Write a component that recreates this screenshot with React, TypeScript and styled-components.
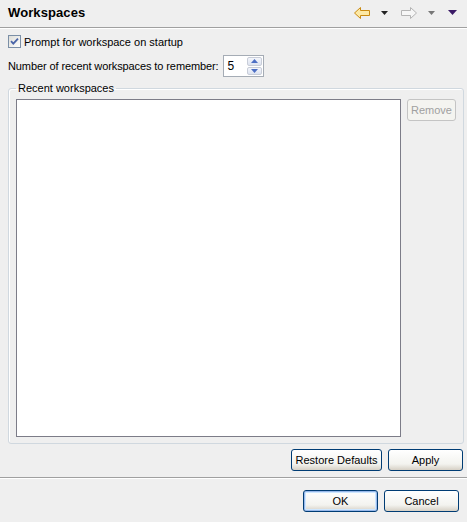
import React, { FC } from 'react';
import styled, { createGlobalStyle } from 'styled-components';

const GlobalStyle = createGlobalStyle`
  html, body {
    margin: 0;
    padding: 0;
    background: #efefef;
  }
  body {
    font-family: Tahoma, "Liberation Sans", Arial, sans-serif;
    font-size: 11px;
    color: #000;
  }
`;

const Page = styled.div`
  box-sizing: border-box;
  width: 467px;
  height: 522px;
  display: flex;
  flex-direction: column;
  background: #efefef;
`;

const Header = styled.div`
  box-sizing: border-box;
  height: 28px;
  display: flex;
  align-items: center;
  justify-content: space-between;
  padding: 0 8px 2px 8px;
  border-bottom: 1px solid #a0a0a0;
  box-shadow: 0 1px 0 #ffffff;
`;

const Title = styled.h1`
  margin: 0;
  font-size: 13px;
  font-weight: bold;
  letter-spacing: 0.1px;
`;

const NavBar = styled.div`
  display: flex;
  align-items: center;
  gap: 4px;
  margin-right: 2px;
`;

const Content = styled.div`
  flex: 1;
  display: flex;
  flex-direction: column;
  padding: 6px 4px 0 8px;
`;

const CheckRow = styled.label`
  display: flex;
  align-items: center;
  gap: 3px;
  height: 15px;
`;

const SpinRow = styled.div`
  display: flex;
  align-items: center;
  gap: 4px;
  margin-top: 5px;
  height: 24px;
  letter-spacing: -0.1px;
`;

const Spinner = styled.div`
  box-sizing: border-box;
  display: flex;
  width: 41px;
  height: 22px;
  border: 1px solid #a5acb5;
  background: #fff;
`;

const SpinText = styled.div`
  flex: 1;
  padding: 3px 0 0 4px;
  font-size: 12px;
`;

const SpinButtons = styled.div`
  box-sizing: border-box;
  width: 17px;
  display: flex;
  flex-direction: column;
  gap: 1px;
  padding: 1px;
`;

const SpinButton = styled.div`
  flex: 1;
  display: flex;
  align-items: center;
  justify-content: center;
  border: 1px solid #c8cdd8;
  border-radius: 2px;
  background: linear-gradient(#f4f6fb, #dde3f0);
`;

const Group = styled.fieldset`
  box-sizing: border-box;
  margin: 4px 0 0 0;
  padding: 5px 7px 4px 7px;
  height: 362px;
  border: 1px solid #d0d8df;
  border-radius: 3px;
  box-shadow: inset 1px 1px 0 #fff;
  display: flex;
  gap: 6px;
  align-items: flex-start;
`;

const Legend = styled.legend`
  padding: 0 2px;
  margin-left: 0;
  color: #000;
`;

const ListBox = styled.div`
  box-sizing: border-box;
  width: 385px;
  height: 338px;
  background: #fff;
  border: 1px solid #7c7c88;
`;

const PushButton = styled.button<{ $width: number; $focused?: boolean }>`
  box-sizing: border-box;
  width: ${({ $width }) => $width}px;
  height: 22px;
  padding: 0;
  font-family: inherit;
  font-size: 11px;
  color: ${({ disabled }) => (disabled ? '#a0a0a0' : '#000')};
  border: 1px solid ${({ disabled }) => (disabled ? '#c4c4c4' : '#003c74')};
  border-radius: 3px;
  background: ${({ disabled }) =>
    disabled ? '#f4f4f0' : 'linear-gradient(#ffffff 0%, #f3f3ef 70%, #d6d0c5 100%)'};
  box-shadow: ${({ $focused }) =>
    $focused ? 'inset 0 0 0 1px #98b8ea, inset 0 0 0 2px #cee7ff' : 'none'};
`;

const ButtonRow = styled.div`
  display: flex;
  justify-content: flex-end;
  gap: 6px;
  margin-top: 5px;
`;

const Footer = styled.div`
  box-sizing: border-box;
  height: 45px;
  display: flex;
  justify-content: flex-end;
  align-items: flex-start;
  gap: 6px;
  padding: 12px 8px 0 0;
  border-top: 1px solid #a0a0a0;
  box-shadow: inset 0 1px 0 #fff;
`;

const CheckBox: FC = () => (
  <svg width="13" height="13" viewBox="0 0 13 13">
    <defs>
      <linearGradient id="cbg" x1="0" y1="0" x2="1" y2="1">
        <stop offset="0" stopColor="#dcdcd7" />
        <stop offset="1" stopColor="#ffffff" />
      </linearGradient>
    </defs>
    <rect x="0.5" y="0.5" width="12" height="12" fill="url(#cbg)" stroke="#7b8fa6" />
    <path d="M3 6.2 L5.3 8.6 L10 3.6" fill="none" stroke="#4a65a8" strokeWidth="1.8" />
  </svg>
);

const Triangle: FC<{ color: string; up?: boolean }> = ({ color, up }) => (
  <svg width="7" height="4" viewBox="0 0 7 4">
    <path d={up ? 'M0 4 L3.5 0 L7 4 Z' : 'M0 0 L7 0 L3.5 4 Z'} fill={color} />
  </svg>
);

const BackArrow: FC = () => (
  <svg width="16" height="12" viewBox="0 0 16 12">
    <path
      d="M0.5 6 L6.5 0.5 L6.5 3.5 L15.5 3.5 L15.5 8.5 L6.5 8.5 L6.5 11.5 Z"
      fill="#fde9a5"
      stroke="#c98a12"
      strokeLinejoin="round"
    />
  </svg>
);

const ForwardArrow: FC = () => (
  <svg width="16" height="12" viewBox="0 0 16 12">
    <path
      d="M15.5 6 L9.5 0.5 L9.5 3.5 L0.5 3.5 L0.5 8.5 L9.5 8.5 L9.5 11.5 Z"
      fill="#f6f6f6"
      stroke="#b4b4b4"
      strokeLinejoin="round"
    />
  </svg>
);

const Spacer = styled.span<{ $w: number }>`
  width: ${({ $w }) => $w}px;
`;

const App: FC = () => (
  <Page>
    <GlobalStyle />
    <Header>
      <Title>Workspaces</Title>
      <NavBar>
        <BackArrow />
        <Spacer $w={3} />
        <Triangle color="#222" />
        <Spacer $w={5} />
        <ForwardArrow />
        <Spacer $w={3} />
        <Triangle color="#777" />
        <Spacer $w={5} />
        <svg width="9" height="5" viewBox="0 0 9 5">
          <path d="M0 0 L9 0 L4.5 5 Z" fill="#3a1a66" />
        </svg>
      </NavBar>
    </Header>
    <Content>
      <CheckRow>
        <CheckBox />
        <span>Prompt for workspace on startup</span>
      </CheckRow>
      <SpinRow>
        <span>Number of recent workspaces to remember:</span>
        <Spinner>
          <SpinText>5</SpinText>
          <SpinButtons>
            <SpinButton>
              <Triangle color="#4d6fc4" up />
            </SpinButton>
            <SpinButton>
              <Triangle color="#4d6fc4" />
            </SpinButton>
          </SpinButtons>
        </Spinner>
      </SpinRow>
      <Group>
        <Legend>Recent workspaces</Legend>
        <ListBox />
        <PushButton $width={49} disabled>
          Remove
        </PushButton>
      </Group>
      <ButtonRow>
        <PushButton $width={91}>Restore Defaults</PushButton>
        <PushButton $width={75}>Apply</PushButton>
      </ButtonRow>
    </Content>
    <Footer>
      <PushButton $width={75} $focused>
        OK
      </PushButton>
      <PushButton $width={75}>Cancel</PushButton>
    </Footer>
  </Page>
);

export default App;
